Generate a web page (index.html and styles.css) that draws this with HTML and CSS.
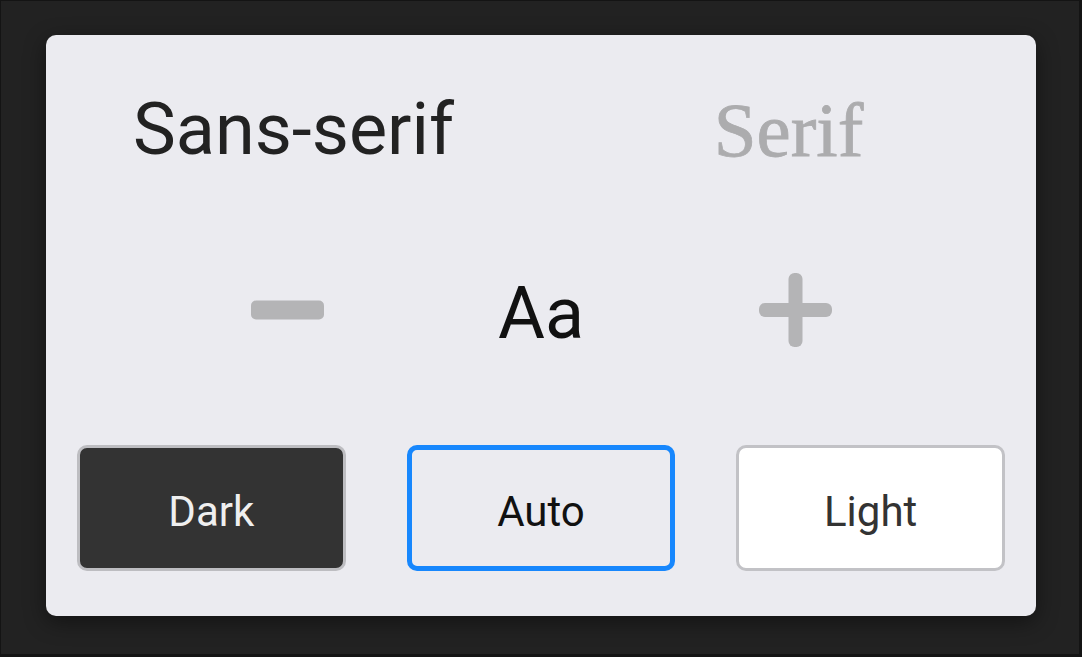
FILE: index.html
```html
<!DOCTYPE html>
<html>
<head>
<meta charset="utf-8">
<link rel="stylesheet" href="styles.css">
</head>
<body>
<div class="frame">
  <div class="card">
    <div class="fonts">
      <div class="font-opt sans">Sans-serif</div>
      <div class="font-opt serif">Serif</div>
    </div>
    <div class="size">
      <svg class="icon minus" width="73" height="20" viewBox="0 0 73 20"><rect x="0" y="0.5" width="73" height="19" rx="5" fill="#b4b4b6"/></svg>
      <div class="aa">Aa</div>
      <svg class="icon plus" width="73" height="74" viewBox="0 0 73 74"><rect x="29.5" y="0" width="14" height="74" rx="6" fill="#b4b4b6"/><rect x="0" y="30" width="73" height="14" rx="6" fill="#b4b4b6"/></svg>
    </div>
    <div class="themes">
      <div class="theme dark">Dark</div>
      <div class="theme auto">Auto</div>
      <div class="theme light">Light</div>
    </div>
  </div>
</div>
</body>
</html>
```
FILE: styles.css
```css
html, body {
  margin: 0;
  padding: 0;
  background: #141414;
}
.frame {
  box-sizing: border-box;
  width: 1082px;
  height: 657px;
  border: 1px solid #141414;
  border-right-width: 3px;
  border-bottom-width: 3px;
  background: #222222;
  padding: 34px 0 0 45px;
}
.card {
  box-sizing: border-box;
  width: 990px;
  height: 581px;
  background: #ebebf0;
  border-radius: 10px;
  box-shadow: 0 6px 22px rgba(0, 0, 0, 0.45);
  padding: 59px 31px 0 31px;
  font-family: Roboto, "Liberation Sans", sans-serif;
}
.fonts {
  display: grid;
  grid-template-columns: 1fr 1fr;
  margin: 0 -31px;
  height: 72px;
}
.font-opt {
  text-align: center;
  line-height: 72px;
  white-space: nowrap;
}
.sans {
  font-family: Roboto, sans-serif;
  font-size: 72px;
  color: #222222;
}
.serif {
  font-family: "Liberation Serif", serif;
  font-size: 77px;
  color: #acacae;
  -webkit-text-stroke: 0.8px #acacae;
}
.size {
  display: grid;
  grid-template-columns: repeat(3, 254px);
  justify-content: center;
  justify-items: center;
  align-items: center;
  margin: 107px -31px 0 -31px;
  height: 72px;
}
.icon {
  display: block;
  margin-bottom: 8px;
}
.aa {
  font-size: 72px;
  line-height: 72px;
  color: #111111;
}
.themes {
  display: grid;
  grid-template-columns: repeat(3, 1fr);
  gap: 61px;
  margin-top: 100px;
}
.theme {
  box-sizing: border-box;
  height: 126px;
  border-radius: 10px;
  display: flex;
  align-items: center;
  justify-content: center;
  font-size: 42px;
  padding-top: 6px;
}
.dark {
  background: #333333;
  border: 3px solid #bdbdc1;
  color: #efefef;
}
.auto {
  background: #ebebf0;
  border: 5px solid #1787fd;
  color: #111111;
}
.light {
  background: #ffffff;
  border: 3px solid #c2c2c6;
  color: #333333;
}
```
